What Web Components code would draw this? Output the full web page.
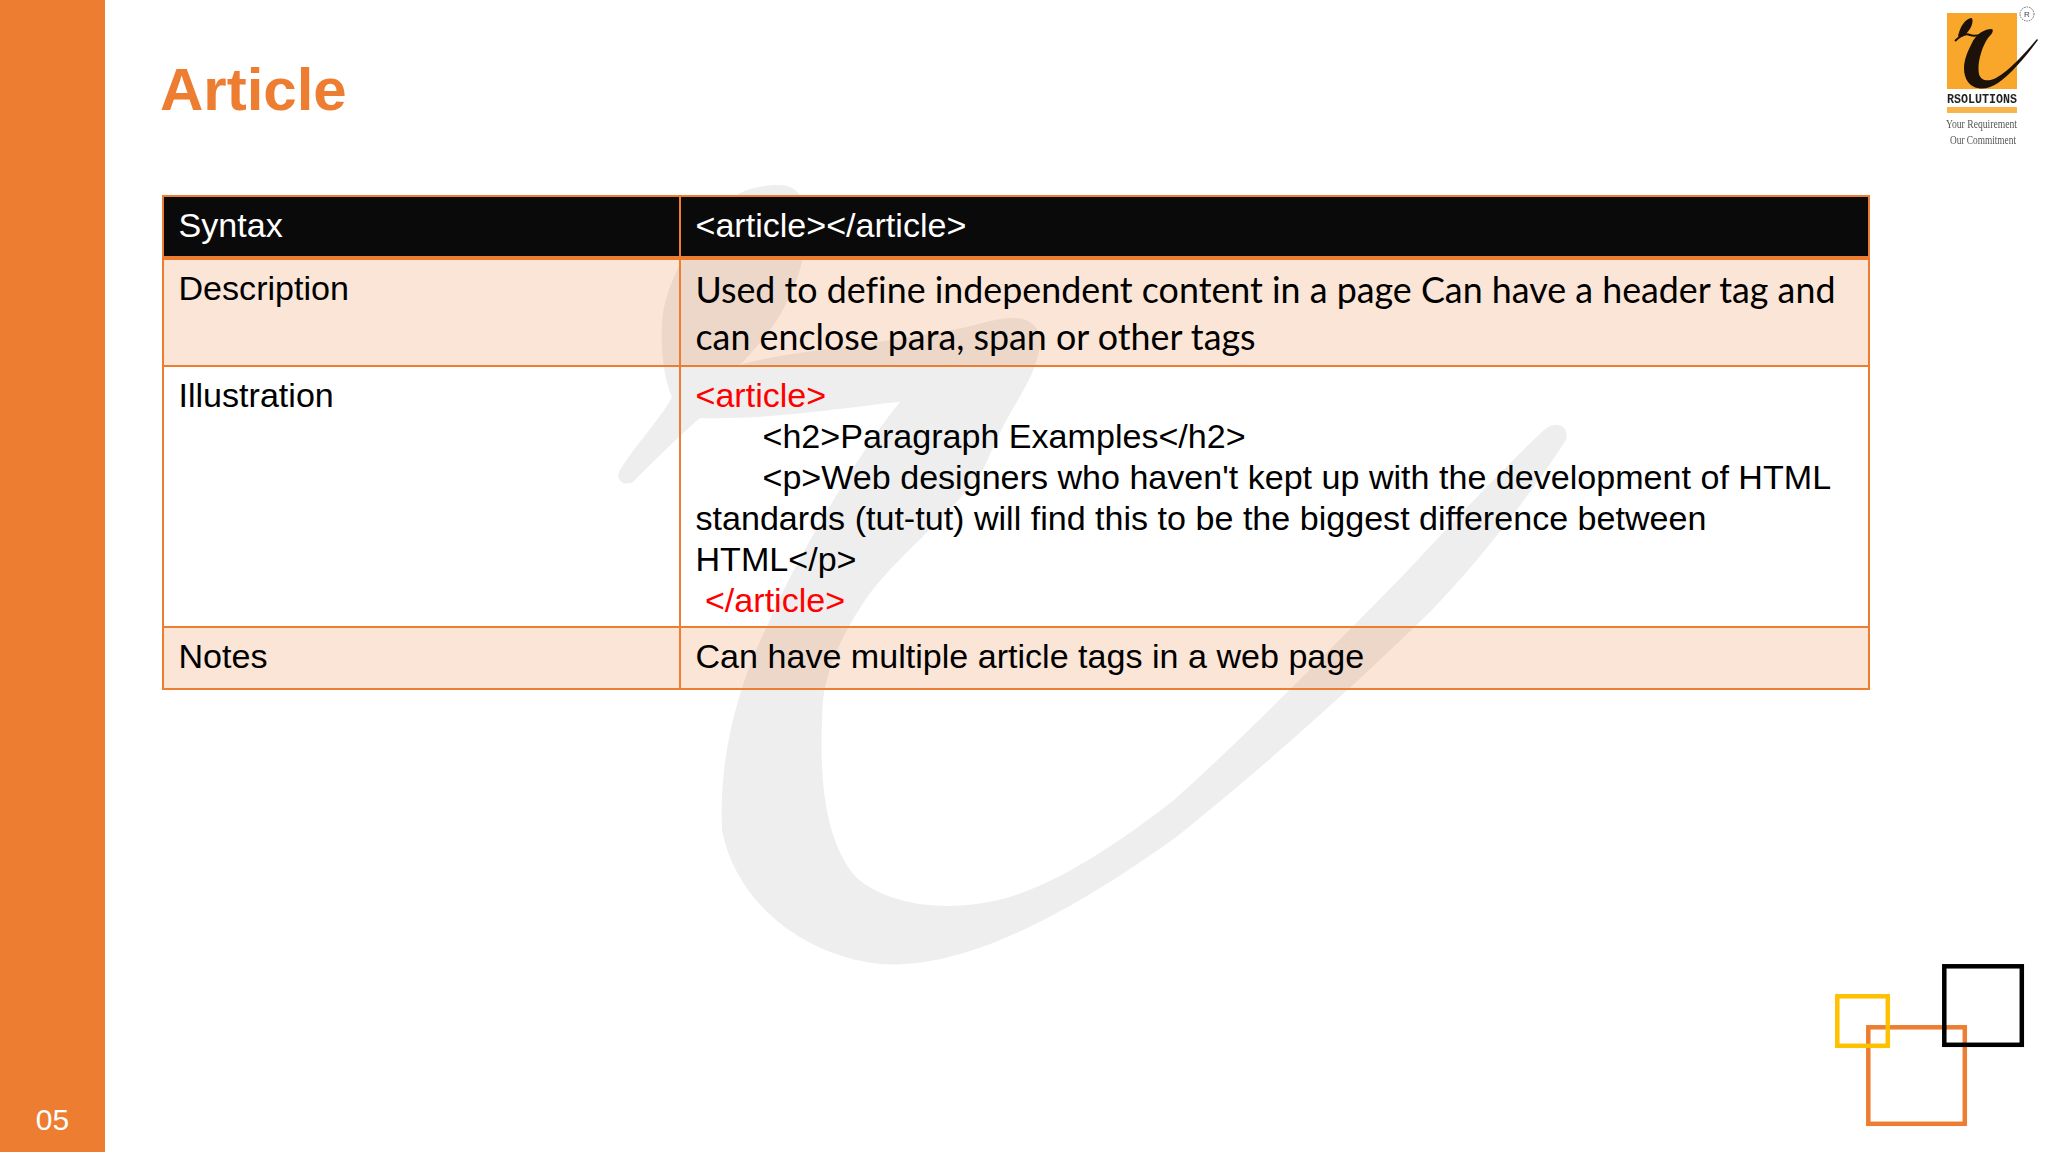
<!DOCTYPE html>
<html>
<head>
<meta charset="utf-8">
<title>Article</title>
<style>
  html, body { margin: 0; height: 100%; background: #fff; }
  .cal { font-family: Lato, sans-serif; font-size: 35.8px; line-height: 47px; font-variant-ligatures: none; margin-top: -2px; padding-bottom: 5px; }
  .ill { padding-bottom: 5px; }
  .one { padding-bottom: 11px; }
  .top { padding-bottom: 10px; }
  .red { color: #f00; }
  .tab { display: inline-block; width: 67px; }
</style>
</head>
<body>
<slide-page num="05" heading="Article">
  <slide-row kind="head" label="Syntax"><div class="top">&lt;article&gt;&lt;/article&gt;</div></slide-row>
  <slide-row kind="band" label="Description"><div class="cal">Used to define independent content in a page Can have a header tag and can enclose para, span or other tags</div></slide-row>
  <slide-row kind="plain" label="Illustration"><div class="ill"><span class="red">&lt;article&gt;</span><br><span class="tab"></span>&lt;h2&gt;Paragraph Examples&lt;/h2&gt;<br><span class="tab"></span>&lt;p&gt;Web designers who haven't kept up with the development of HTML standards (tut-tut) will find this to be the biggest difference between HTML&lt;/p&gt;<br><span class="red">&nbsp;&lt;/article&gt;</span></div></slide-row>
  <slide-row kind="band" label="Notes"><div class="one">Can have multiple article tags in a web page</div></slide-row>
</slide-page>

<script>
class SlideRow extends HTMLElement {
  constructor() {
    super()
    this.attachShadow({ mode: 'open' })
    this.shadowRoot.innerHTML = `
      <style>
        :host {
          display: grid;
          grid-template-columns: 517px 1fr;
          border-bottom: 2px solid #ed7d31;
          color: #000;
        }
        :host([kind=head]) {
          background: #0a0a0a;
          color: #fff;
          border-bottom-width: 4px;
        }
        :host([kind=band]) { background: rgba(237, 125, 49, .2); }
        .label, .value { padding: 8px 15px 0 14.5px; line-height: 41px; min-width: 0; }
        .label { border-right: 2px solid #ed7d31; }
      </style>
      <div class="label"></div>
      <div class="value"><slot></slot></div>
    `
    this.shadowRoot.querySelector('.label').textContent = this.getAttribute('label')
  }
}

class SlidePage extends HTMLElement {
  constructor() {
    super()
    this.attachShadow({ mode: 'open' })
    this.shadowRoot.innerHTML = `
      <style>
        :host {
          display: flex;
          position: relative;
          width: 2048px;
          height: 1152px;
          overflow: hidden;
          font-family: "Liberation Sans", Arial, sans-serif;
          font-size: 34.1px;
        }
        .side {
          width: 105px;
          flex: none;
          background: #ed7d31;
          color: #fff;
          display: flex;
          align-items: flex-end;
          justify-content: center;
          font-size: 30px;
          padding-bottom: 15px;
          box-sizing: border-box;
        }
        main {
          flex: 1;
          padding: 52px 0 0 55px;
          position: relative;
        }
        h1 {
          margin: 0 0 55px 0;
          font-size: 60px;
          line-height: 76px;
          color: #ed7d31;
          font-weight: bold;
          height: 88px;
        }
        .table {
          width: 1704px;
          margin-left: 2px;
          border: 2px solid #ed7d31;
          border-bottom: 0;
        }
        .mark, .logo, .squares { position: absolute; }
        .mark { left: 0; top: 0; }
        .logo { left: 1920px; top: 0; filter: blur(.5px); }
        .squares { left: 1830px; top: 960px; }
      </style>
      <div class="side"></div>
      <svg class="mark" width="2048" height="1152" viewBox="0 0 2048 1152">
        <path fill="#eeeeee" d="M777 185 C790 184 800 190 804 205 C812 240 800 280 780 315 C768 335 752 352 740 365 C790 350 880 345 967 327 C985 322 1000 318 1013 318 C1030 318 1042 328 1040 345 C1037 365 1030 380 1015 405 C1000 430 990 455 983 470 C955 510 905 550 874 588 C850 620 828 660 823 700 C818 780 825 840 855 876 C880 900 930 912 983 903 C1040 895 1110 850 1174 800 C1230 750 1290 690 1365 614 C1420 560 1480 490 1544 430 C1555 420 1570 425 1566 440 C1540 480 1490 550 1430 612 C1350 690 1260 770 1175 838 C1060 920 960 970 880 964 C800 955 735 900 722 830 C719 760 735 690 770 620 C790 570 860 450 900 402 C860 405 780 420 700 418 C680 435 650 465 633 482 C622 487 615 478 620 470 C635 445 660 420 672 397 C662 375 660 340 663 313 C670 270 705 215 740 193 C750 188 765 185 777 185 Z"/>
      </svg>
      <main>
        <h1></h1>
        <div class="table"><slot></slot></div>
      </main>
      <svg class="logo" width="128" height="150" viewBox="0 0 128 150">
        <rect x="27" y="13" width="70" height="76" fill="#f9a72b"/>
        <circle cx="107" cy="14" r="7" fill="#fff" stroke="#666" stroke-width="1" stroke-dasharray="1.5 1"/>
        <text x="107" y="17" font-size="8" text-anchor="middle" font-family="Liberation Sans" fill="#444">R</text>
        <path fill="#1c120a" d="M72 29 C65 29 56 33 51 45 C44 58 41 72 48 82 C55 91 68 90 78 83 C92 73 106 56 118 40 L117 39 C104 54 90 70 76 78 C68 82 61 81 59 74 C57 65 61 48 68 38 C72 34 74 31 72 29 Z"/>
        <path fill="#1c120a" d="M51 18 C45 19 40 27 38 36 C41 40 48 33 51 27 C53 22 53 18 51 18 Z"/>
        <path fill="none" stroke="#1c120a" stroke-width="2" d="M35 41 C40 36 46 33 50 35 C56 37 62 35 70 30"/>
        <text x="27" y="103" font-size="13" font-weight="bold" textLength="70" lengthAdjust="spacingAndGlyphs" font-family="Liberation Mono" fill="#222">RSOLUTIONS</text>
        <rect x="27" y="107" width="70" height="6" fill="#f9b44a"/>
        <text x="26" y="128" font-size="12" textLength="71" lengthAdjust="spacingAndGlyphs" font-family="Liberation Serif" fill="#555">Your Requirement</text>
        <text x="30" y="144" font-size="12" textLength="66" lengthAdjust="spacingAndGlyphs" font-family="Liberation Serif" fill="#555">Our Commitment</text>
      </svg>
      <svg class="squares" width="218" height="192" viewBox="1830 960 218 192" fill="none" stroke-width="4.5">
        <rect x="1868.3" y="1027.3" width="96.5" height="96.5" stroke="#ed7d31"/>
        <rect x="1837.3" y="996.3" width="50.5" height="49.5" stroke="#ffc000"/>
        <rect x="1944.3" y="966.3" width="77.5" height="78.5" stroke="#000"/>
      </svg>
    `
    this.shadowRoot.querySelector('.side').textContent = this.getAttribute('num')
    this.shadowRoot.querySelector('h1').textContent = this.getAttribute('heading')
  }
}

customElements.define('slide-row', SlideRow)
customElements.define('slide-page', SlidePage)
</script>
</body>
</html>
